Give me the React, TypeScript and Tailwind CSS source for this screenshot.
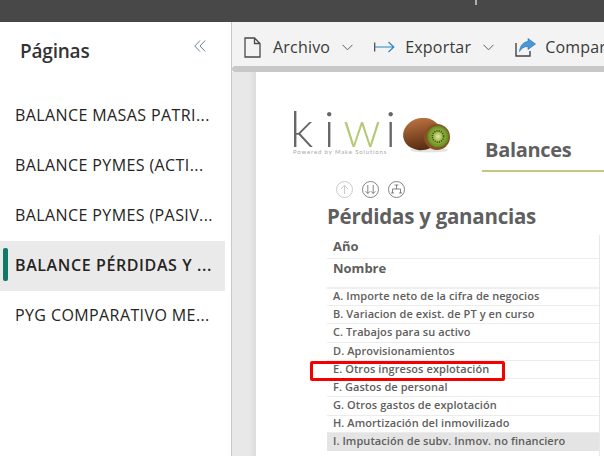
const pages = [
  { name: 'BALANCE MASAS PATRI...', active: false },
  { name: 'BALANCE PYMES (ACTI...', active: false },
  { name: 'BALANCE PYMES (PASIV...', active: false },
  { name: 'BALANCE PÉRDIDAS Y ...', active: true },
  { name: 'PYG COMPARATIVO ME...', active: false },
];

const rows = [
  { label: 'A. Importe neto de la cifra de negocios', h: 'h-[17px]' },
  { label: 'B. Variacion de exist. de PT y en curso', h: 'h-[18px]' },
  { label: 'C. Trabajos para su activo', h: 'h-[19px]' },
  { label: 'D. Aprovisionamientos', h: 'h-[18px]' },
  { label: 'E. Otros ingresos explotación', h: 'h-[18px]' },
  { label: 'F. Gastos de personal', h: 'h-[18px]' },
  { label: 'G. Otros gastos de explotación', h: 'h-[19px]' },
  { label: 'H. Amortización del inmovilizado', h: 'h-[17px]' },
];

function Chevron() {
  return (
    <svg className="shrink-0" width="11" height="7" viewBox="0 0 11 7" fill="none" stroke="#605e5c" strokeWidth="1">
      <path d="M0.5 0.8 L5.5 5.8 L10.5 0.8" />
    </svg>
  );
}

function KiwiFruit() {
  return (
    <svg width="50" height="36" viewBox="0 0 50 36">
      <defs>
        <linearGradient id="skin" x1="0" y1="0" x2="0" y2="1">
          <stop offset="0" stopColor="#b8703f" />
          <stop offset="1" stopColor="#552a10" />
        </linearGradient>
        <radialGradient id="flesh">
          <stop offset="0" stopColor="#e4e8b8" />
          <stop offset="0.35" stopColor="#a9c04e" />
          <stop offset="1" stopColor="#5f8a1e" />
        </radialGradient>
      </defs>
      <ellipse cx="27" cy="32" rx="19" ry="2.5" fill="#e4e4e4" />
      <ellipse cx="20" cy="16" rx="19" ry="16" fill="url(#skin)" transform="rotate(-12 20 16)" />
      <circle cx="35" cy="19" r="13" fill="#8a4f22" />
      <circle cx="36" cy="18.5" r="10.8" fill="url(#flesh)" />
      <circle cx="36" cy="18.5" r="5.6" fill="none" stroke="#2c3a12" strokeWidth="1.6" strokeDasharray="1 1.2" />
    </svg>
  );
}

function RoundIcon({ children, light }: { children: React.ReactNode; light?: boolean }) {
  return (
    <svg width="17" height="17" viewBox="0 0 17 17" fill="none" stroke={light ? '#bdbdbd' : '#666666'} strokeWidth="0.8">
      <circle cx="8.5" cy="8.5" r="8" />
      {children}
    </svg>
  );
}

export default function App() {
  return (
    <div className="w-[604px] h-[456px] overflow-hidden flex flex-col bg-white font-['Open_Sans',sans-serif]">
      <div className="h-[22px] shrink-0 bg-[#484848] relative">
        <div className="absolute left-[475px] top-0 w-[2px] h-[5px] bg-[#b0b0b0]" />
      </div>
      <div className="flex flex-1 min-h-0">
        <aside className="w-[232px] shrink-0 border-r border-[#c8c8c8] flex flex-col">
          <div className="h-[69px] shrink-0 pl-[20px] pr-[25px] flex items-start justify-between">
            <h2 className="mt-[15px] text-[19px] leading-[28px] font-semibold text-[#333333] tracking-[-0.2px]">Páginas</h2>
            <svg className="mt-[18px]" width="12" height="12" viewBox="0 0 12 12" fill="none" stroke="#6d8299" strokeWidth="1">
              <path d="M6 0.5 L0.8 6 L6 11.5 M11.2 0.5 L6 6 L11.2 11.5" />
            </svg>
          </div>
          <nav className="flex flex-col w-[225px]">
            {pages.map((p) => (
              <div key={p.name} className={p.active ? 'relative h-[50px] flex items-center pl-[15px] pb-[2px] bg-[#eaeaea]' : 'h-[50px] flex items-center pl-[15px] pb-[2px]'}>
                {p.active && <span className="absolute left-[3px] top-[7px] w-[5px] h-[33px] rounded-[2px] bg-[#117865]" />}
                <span className={p.active ? 'text-[16px] font-semibold text-[#252423] whitespace-nowrap tracking-[0.6px]' : 'text-[16px] text-[#252423] whitespace-nowrap tracking-[0.4px]'}>
                  {p.name}
                </span>
              </div>
            ))}
          </nav>
        </aside>

        <main className="flex-1 min-w-0 flex flex-col">
          <div className="h-[44px] shrink-0 bg-[#f3f3f3] flex items-center pl-[12px] pt-[6px] overflow-hidden whitespace-nowrap text-[16px] text-[#3b3a39] tracking-[0.2px]">
            <svg className="shrink-0" width="17" height="21" viewBox="0 0 17 21" fill="none" stroke="#4a4a4a" strokeWidth="1.3">
              <path d="M1 1 H10.5 L16 6.5 V20 H1 Z M10.5 1 V6.5 H16" />
            </svg>
            <span className="ml-[12px]">Archivo</span>
            <span className="ml-[12px] flex"><Chevron /></span>
            <svg className="ml-[21px] shrink-0" width="21" height="12" viewBox="0 0 21 12" fill="none" stroke="#2f85c4" strokeWidth="1.2">
              <path d="M0.7 1.5 V10.5" stroke="#444444" />
              <path d="M0.7 6 H19.5 M14.5 1 L19.8 6 L14.5 11" />
            </svg>
            <span className="ml-[10px]">Exportar</span>
            <span className="ml-[12px] flex"><Chevron /></span>
            <svg className="ml-[21px] shrink-0" width="21" height="19" viewBox="0 0 21 19">
              <path d="M1 5 V18 H15 V13" fill="none" stroke="#444444" strokeWidth="1.4" />
              <path d="M13 0.5 L20.5 6 L13 11.5 V8.5 C9 8.5 6.5 10 4.5 13.5 C5 8 8 4 13 3.5 Z" fill="#4a98d8" stroke="#1f6fb0" strokeWidth="0.6" />
            </svg>
            <span className="ml-[9px]">Compartir</span>
          </div>
          <div className="h-[6px] shrink-0 bg-[#c8c8c8] rounded-l-[3px]" />

          <div className="flex-1 min-h-0 flex">
            <div className="w-[24px] shrink-0 bg-gradient-to-r from-[#e8e8e8] from-70% to-[#dcdcdc]" />
            <div className="flex-1 min-w-0 relative pt-[38px]">
              <div className="flex items-start">
                <div className="ml-[34px] w-[113px] shrink-0 font-['Lato',sans-serif]">
                  <div className="h-[37px] flex items-end text-[49px] leading-[37px] font-light tracking-[7.5px] text-[#666666] whitespace-nowrap">
                    <span>k</span>
                    <span className="ml-[3px]">i</span>
                    <span className="ml-[1px] text-[#b5c876]">w</span>
                    <span className="ml-[-3px]">i</span>
                  </div>
                  <p className="mt-[1px] ml-[3px] text-[6px] leading-[7px] tracking-[0.85px] text-[#a8a8a8] whitespace-nowrap">Powered by Make Solutions</p>
                </div>
                <div className="ml-[-1px] mt-[8px] shrink-0"><KiwiFruit /></div>
                <div className="ml-[30px] mt-[27px] flex-1 min-w-0">
                  <h3 className="pl-[3px] text-[20px] leading-[26px] font-bold text-[#5f5f5f] tracking-[-0.3px]">Balances</h3>
                  <div className="mt-[7px] h-[2px] bg-[#bccb7c]" />
                </div>
              </div>

              <div className="ml-[80px] mt-[9px] flex gap-[9px]">
                <RoundIcon light><path d="M8.5 13 V4.5 M5 8 L8.5 4.5 L12 8" /></RoundIcon>
                <RoundIcon>
                  <path d="M5.8 4 V12.5 M3.6 10.3 L5.8 12.5 L8 10.3 M11.2 4 V12.5 M9 10.3 L11.2 12.5 L13.4 10.3" />
                </RoundIcon>
                <RoundIcon>
                  <path d="M8.5 4 V8 M4.5 12 V8 H12.5 V12 M3 12 H6 M11 12 H14 M6.5 4 H10.5" />
                </RoundIcon>
              </div>

              <div className="ml-[71px] w-[273px]">
                <h1 className="mt-[4px] text-[20.5px] leading-[28px] font-bold text-[#5f5f5f] tracking-[-0.25px] whitespace-nowrap">Pérdidas y ganancias</h1>
                <div className="mt-[5px] border-r border-[#e8e8e8] text-[#605e5c] font-semibold whitespace-nowrap">
                  <div className="h-[24px] border-b border-[#ececec] pl-[6px] flex items-center text-[13px] font-bold">Año</div>
                  <div className="h-[30px] border-b-2 border-[#efefef] pl-[6px] pb-[8px] flex items-center text-[13px] font-bold">Nombre</div>
                  {rows.map((r) => (
                    <div key={r.label} className={`${r.h} border-b border-[#ececec] pl-[6px] pb-[1px] flex items-center text-[11px] tracking-[0.07px]`}>
                      {r.label}
                    </div>
                  ))}
                  <div className="h-[18px] bg-[#e4e4e4] pl-[6px] pb-[1px] flex items-center text-[11px] tracking-[0.07px]">I. Imputación de subv. Inmov. no financiero</div>
                  <div className="h-[18px] pl-[6px] flex items-center text-[11px] tracking-[0.07px]">J. Excesos de provisiones</div>
                </div>
              </div>

              <div className="absolute left-[54px] top-[289px] w-[195px] h-[20px] border-[3px] border-[#f50000] rounded-[2px]" />
            </div>
          </div>
        </main>
      </div>
    </div>
  );
}
